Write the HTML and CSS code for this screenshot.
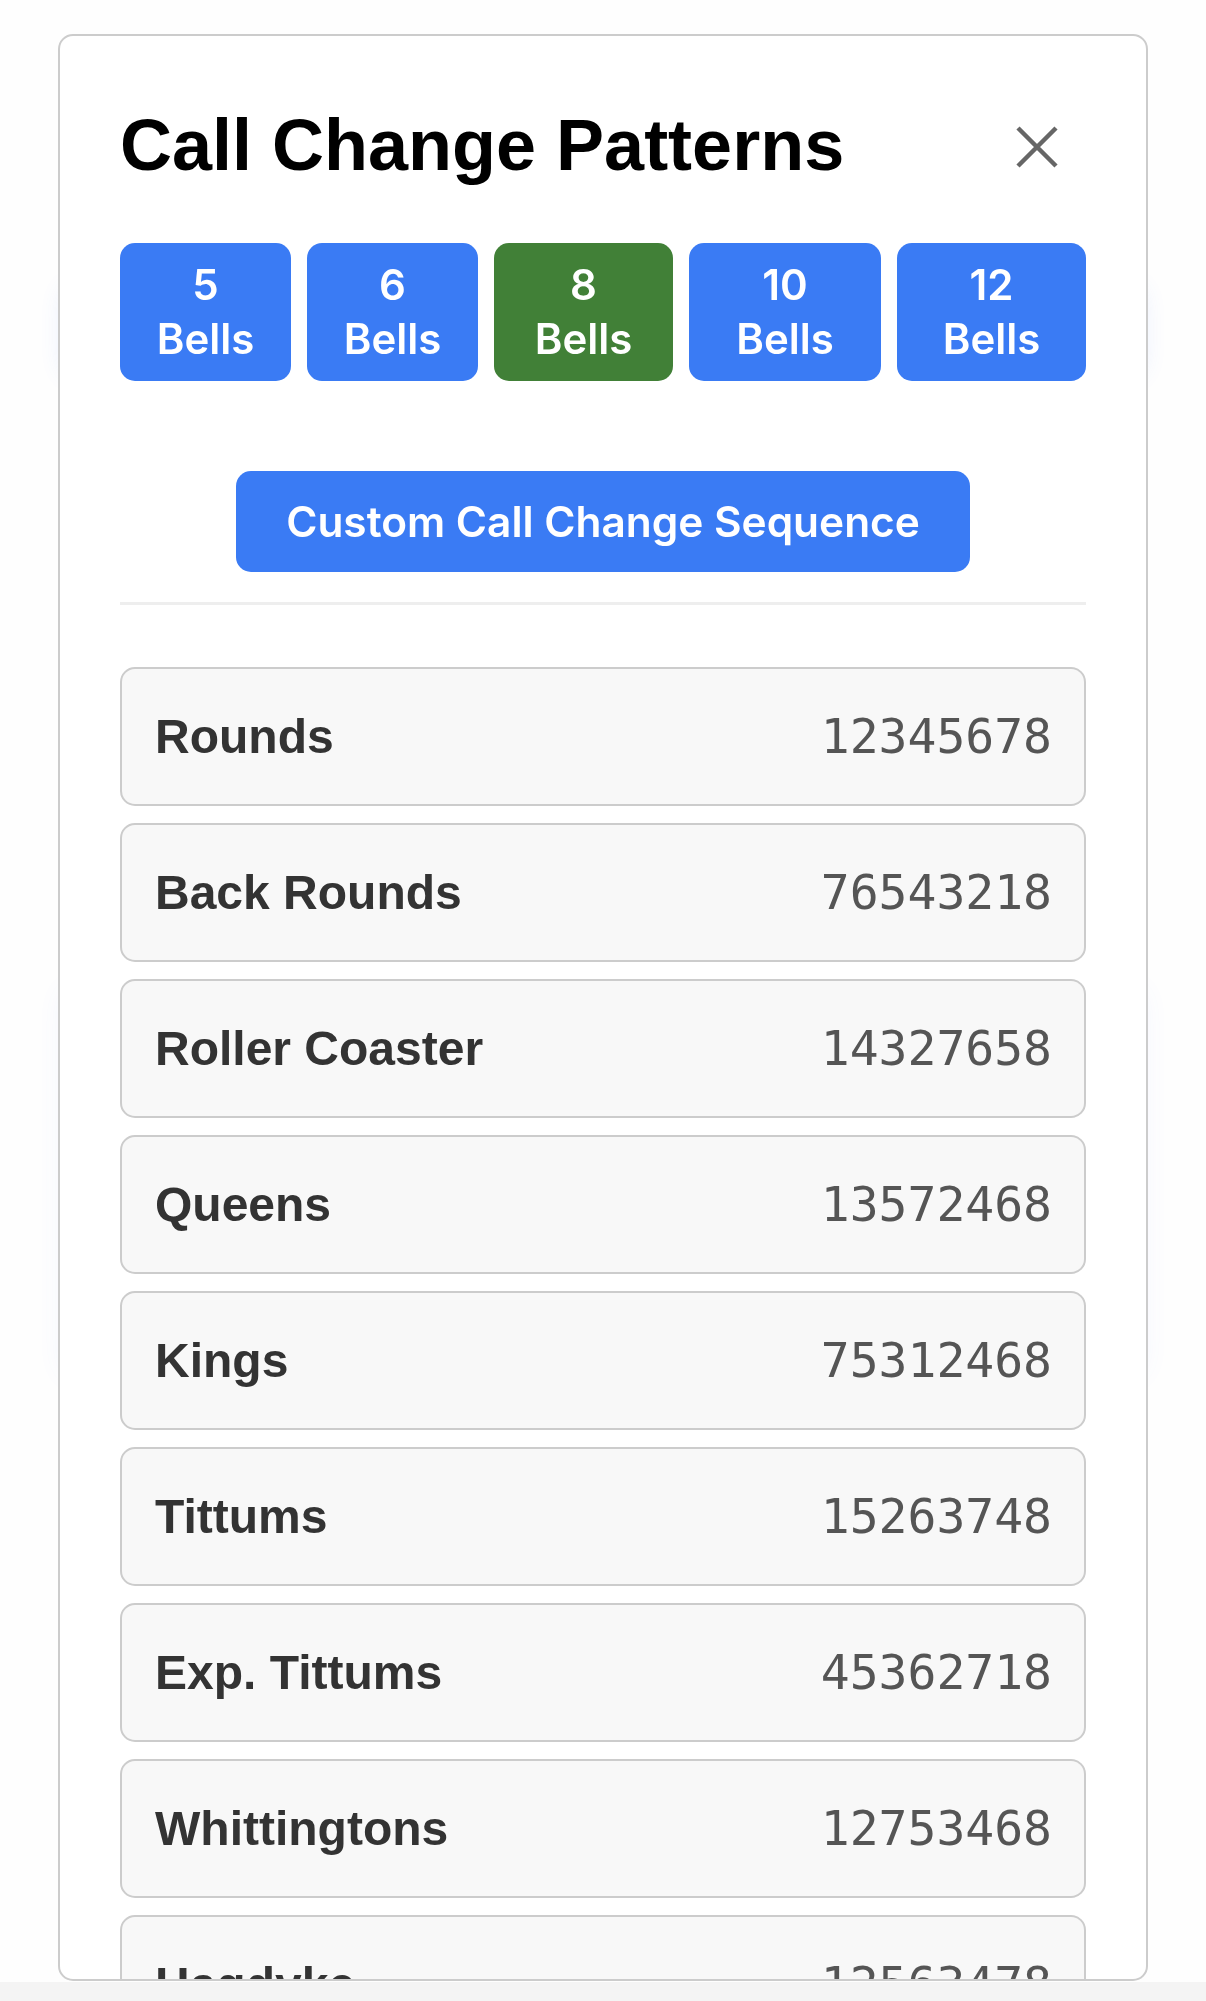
FILE: index.html
```html
<!DOCTYPE html>
<html lang="en">
<head>
<meta charset="utf-8">
<title>Call Change Patterns</title>
<link rel="stylesheet" href="styles.css">
</head>
<body>
<div class="page">
  <div class="bg-card bg-card-top"></div>
  <div class="bg-card bg-card-mid"></div>
  <div class="bg-footer"></div>
</div>

<div class="modal">
  <div class="modal-header">
    <h2 class="modal-title">Call Change Patterns</h2>
    <button class="close-btn" aria-label="Close">
      <svg width="44" height="44" viewBox="0 0 44 44" aria-hidden="true">
        <path d="M3 3 L41 41 M41 3 L3 41" stroke="#666" stroke-width="4.5" fill="none"/>
      </svg>
    </button>
  </div>

  <div class="bell-row">
    <button class="bell-btn"><span class="bell-num">5</span><span>Bells</span></button>
    <button class="bell-btn"><span class="bell-num">6</span><span>Bells</span></button>
    <button class="bell-btn active"><span class="bell-num">8</span><span>Bells</span></button>
    <button class="bell-btn"><span class="bell-num">10</span><span>Bells</span></button>
    <button class="bell-btn"><span class="bell-num">12</span><span>Bells</span></button>
  </div>

  <div class="custom-wrap">
    <button class="custom-btn">Custom Call Change Sequence</button>
  </div>

  <ul class="pattern-list">
    <li class="pattern"><span class="pattern-name">Rounds</span><span class="pattern-seq">12345678</span></li>
    <li class="pattern"><span class="pattern-name">Back Rounds</span><span class="pattern-seq">76543218</span></li>
    <li class="pattern"><span class="pattern-name">Roller Coaster</span><span class="pattern-seq">14327658</span></li>
    <li class="pattern"><span class="pattern-name">Queens</span><span class="pattern-seq">13572468</span></li>
    <li class="pattern"><span class="pattern-name">Kings</span><span class="pattern-seq">75312468</span></li>
    <li class="pattern"><span class="pattern-name">Tittums</span><span class="pattern-seq">15263748</span></li>
    <li class="pattern"><span class="pattern-name">Exp. Tittums</span><span class="pattern-seq">45362718</span></li>
    <li class="pattern"><span class="pattern-name">Whittingtons</span><span class="pattern-seq">12753468</span></li>
    <li class="pattern"><span class="pattern-name">Hagdyke</span><span class="pattern-seq">12563478</span></li>
  </ul>
</div>
</body>
</html>
```

FILE: styles.css
```css
* {
  box-sizing: border-box;
}

html, body {
  margin: 0;
  padding: 0;
  background: #fefefe;
  height: 2001px;
  overflow: hidden;
}

body {
  font-family: "Liberation Sans", Arial, sans-serif;
}

/* page behind the modal */
.page {
  display: flex;
  flex-direction: column;
  height: 2001px;
}

.bg-card {
  margin: 0 64px;
  background: #fefefe;
  border-radius: 16px;
  box-shadow: 0 0 24px rgba(70, 120, 250, 0.14);
}

.bg-card-top {
  margin-top: 286px;
  height: 90px;
}

.bg-card-mid {
  margin-top: 612px;
  height: 388px;
  box-shadow: 0 0 28px rgba(90, 110, 250, 0.08);
}

.bg-footer {
  margin-top: auto;
  height: 19px;
  background: #f4f4f4;
}

/* modal */
.modal {
  position: fixed;
  top: 34px;
  left: 58px;
  width: 1090px;
  height: 1947px;
  background: #fff;
  border: 2px solid #cccccc;
  border-radius: 15px;
  padding: 60px 60px 0;
  overflow: hidden;
}

.modal-header {
  display: flex;
  align-items: center;
  justify-content: space-between;
  margin-top: 7px;
  margin-bottom: 56px;
}

.modal-title {
  margin: 0;
  font-family: "Liberation Sans", Arial, sans-serif;
  font-weight: 700;
  font-size: 72px;
  line-height: 84px;
  color: #000;
}

.close-btn {
  display: flex;
  padding: 0;
  margin: 3px 27px 0 0;
  border: 0;
  background: none;
}

.bell-row {
  display: grid;
  grid-template-columns: 171fr 171fr 179fr 192fr 189fr;
  gap: 16px;
  margin-bottom: 90px;
}

.bell-btn {
  display: flex;
  flex-direction: column;
  align-items: center;
  padding: 15px 0;
  border: 0;
  border-radius: 15px;
  background: #3a7bf4;
  color: #fff;
  font-family: Inter, "Noto Sans", sans-serif;
  font-weight: 600;
  font-size: 42px;
  line-height: 54px;
}

.bell-btn.active {
  background: #418037;
}

.custom-wrap {
  display: flex;
  justify-content: center;
  padding-bottom: 30px;
  border-bottom: 3px solid #eeeeee;
  margin-bottom: 62px;
}

.custom-btn {
  padding: 25px 50px;
  border: 0;
  border-radius: 15px;
  background: #3a7bf4;
  color: #fff;
  font-family: Inter, "Noto Sans", sans-serif;
  font-weight: 600;
  font-size: 42.4px;
  line-height: 51px;
}

.pattern-list {
  list-style: none;
  margin: 0;
  padding: 0;
}

.pattern {
  display: flex;
  align-items: center;
  justify-content: space-between;
  margin-bottom: 17px;
  padding: 40px 32px 40px 33px;
  background: #f8f8f8;
  border: 2px solid #cccccc;
  border-radius: 15px;
}

.pattern-name {
  font-family: "Liberation Sans", Arial, sans-serif;
  font-weight: 700;
  font-size: 48px;
  line-height: 55px;
  color: #333;
}

.pattern-seq {
  font-family: "DejaVu Sans Mono", monospace;
  font-size: 48px;
  line-height: 55px;
  color: #555;
}
```
